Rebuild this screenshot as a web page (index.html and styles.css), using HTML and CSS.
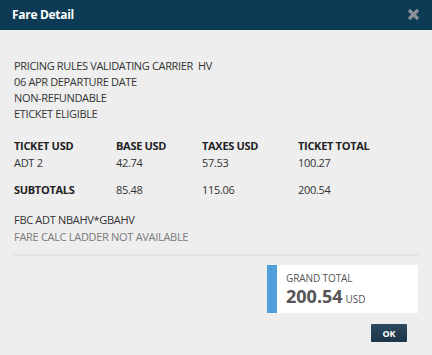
FILE: index.html
```html
<!DOCTYPE html>
<html>
<head>
<meta charset="utf-8">
<link rel="stylesheet" href="styles.css">
</head>
<body>
<div class="dialog">
  <div class="header">
    <span class="title">Fare Detail</span>
    <svg class="close" width="13" height="13" viewBox="0 0 13 13"><path d="M2 2 L11 11 M11 2 L2 11" stroke="#8a9299" stroke-width="3.2" stroke-linecap="butt"/></svg>
  </div>
  <div class="content">
    <div class="rules">
      <div>PRICING RULES VALIDATING CARRIER&nbsp; HV</div>
      <div>06 APR DEPARTURE DATE</div>
      <div>NON-REFUNDABLE</div>
      <div>ETICKET ELIGIBLE</div>
    </div>
    <div class="table">
      <div class="row head">
        <span>TICKET USD</span><span>BASE USD</span><span>TAXES USD</span><span>TICKET TOTAL</span>
      </div>
      <div class="row">
        <span>ADT 2</span><span>42.74</span><span>57.53</span><span>100.27</span>
      </div>
      <div class="row sub">
        <span class="b">SUBTOTALS</span><span>85.48</span><span>115.06</span><span>200.54</span>
      </div>
    </div>
    <div class="fbc">
      <div>FBC ADT NBAHV*GBAHV</div>
      <div class="muted">FARE CALC LADDER NOT AVAILABLE</div>
    </div>
    <div class="sep"></div>
    <div class="footer">
      <div class="grand">
        <div class="bar"></div>
        <div class="gt">
          <div class="gl">GRAND TOTAL</div>
          <div class="gv"><span class="amt">200.54</span> <span class="cur">USD</span></div>
        </div>
      </div>
      <button class="ok">OK</button>
    </div>
  </div>
</div>
</body>
</html>
```
FILE: styles.css
```css
html, body {
  margin: 0;
  padding: 0;
  background: #eeeeee;
}
body {
  font-family: "Open Sans", "Noto Sans", sans-serif;
  font-size: 11px;
  color: #333;
  width: 432px;
  height: 355px;
  overflow: hidden;
}
.dialog {
  width: 432px;
  height: 355px;
  background: #eeeeee;
}
.header {
  height: 30px;
  background: #0d3a55;
  display: flex;
  align-items: center;
  justify-content: space-between;
  padding: 0 12px 0 12px;
  box-sizing: border-box;
}
.title {
  color: #fff;
  font-weight: bold;
  font-size: 12px;
  letter-spacing: -0.3px;
  margin-top: -1px;
}
.close {
  display: block;
  margin-top: -2px;
}
.content {
  padding: 28px 14px 0 14px;
}
.rules div {
  line-height: 16px;
  letter-spacing: -0.35px;
}
.table {
  margin-top: 15px;
}
.row {
  display: grid;
  grid-template-columns: 102px 86px 96px 1fr;
  line-height: 17px;
  letter-spacing: -0.3px;
}
.row.head span, .row .b {
  font-weight: bold;
  color: #222;
}
.row.sub {
  margin-top: 10px;
}
.fbc {
  margin-top: 13px;
  line-height: 17px;
  letter-spacing: -0.3px;
}
.muted {
  color: #7a7a7a;
}
.sep {
  margin-top: 9px;
  height: 2px;
  background: #e2e2e2;
}
.footer {
  display: flex;
  flex-direction: column;
  align-items: flex-end;
}
.grand {
  margin-top: 9px;
  width: 151px;
  height: 48px;
  background: #fff;
  display: flex;
}
.bar {
  width: 10px;
  background: #4f9fd9;
}
.gt {
  padding: 6px 0 0 9px;
  color: #555;
}
.gl {
  font-size: 10px;
  line-height: 14px;
  letter-spacing: -0.1px;
}
.gv {
  line-height: 22px;
}
.amt {
  font-size: 18px;
  font-weight: bold;
  color: #555;
}
.cur {
  font-size: 10px;
}
.ok {
  margin-top: 11px;
  margin-right: 11px;
  width: 36px;
  height: 18px;
  border: none;
  background: linear-gradient(#2e4a60, #1d3446);
  color: #fff;
  font-family: "Open Sans", sans-serif;
  font-size: 9px;
  font-weight: bold;
  padding: 0;
  border-radius: 1px;
}
```
